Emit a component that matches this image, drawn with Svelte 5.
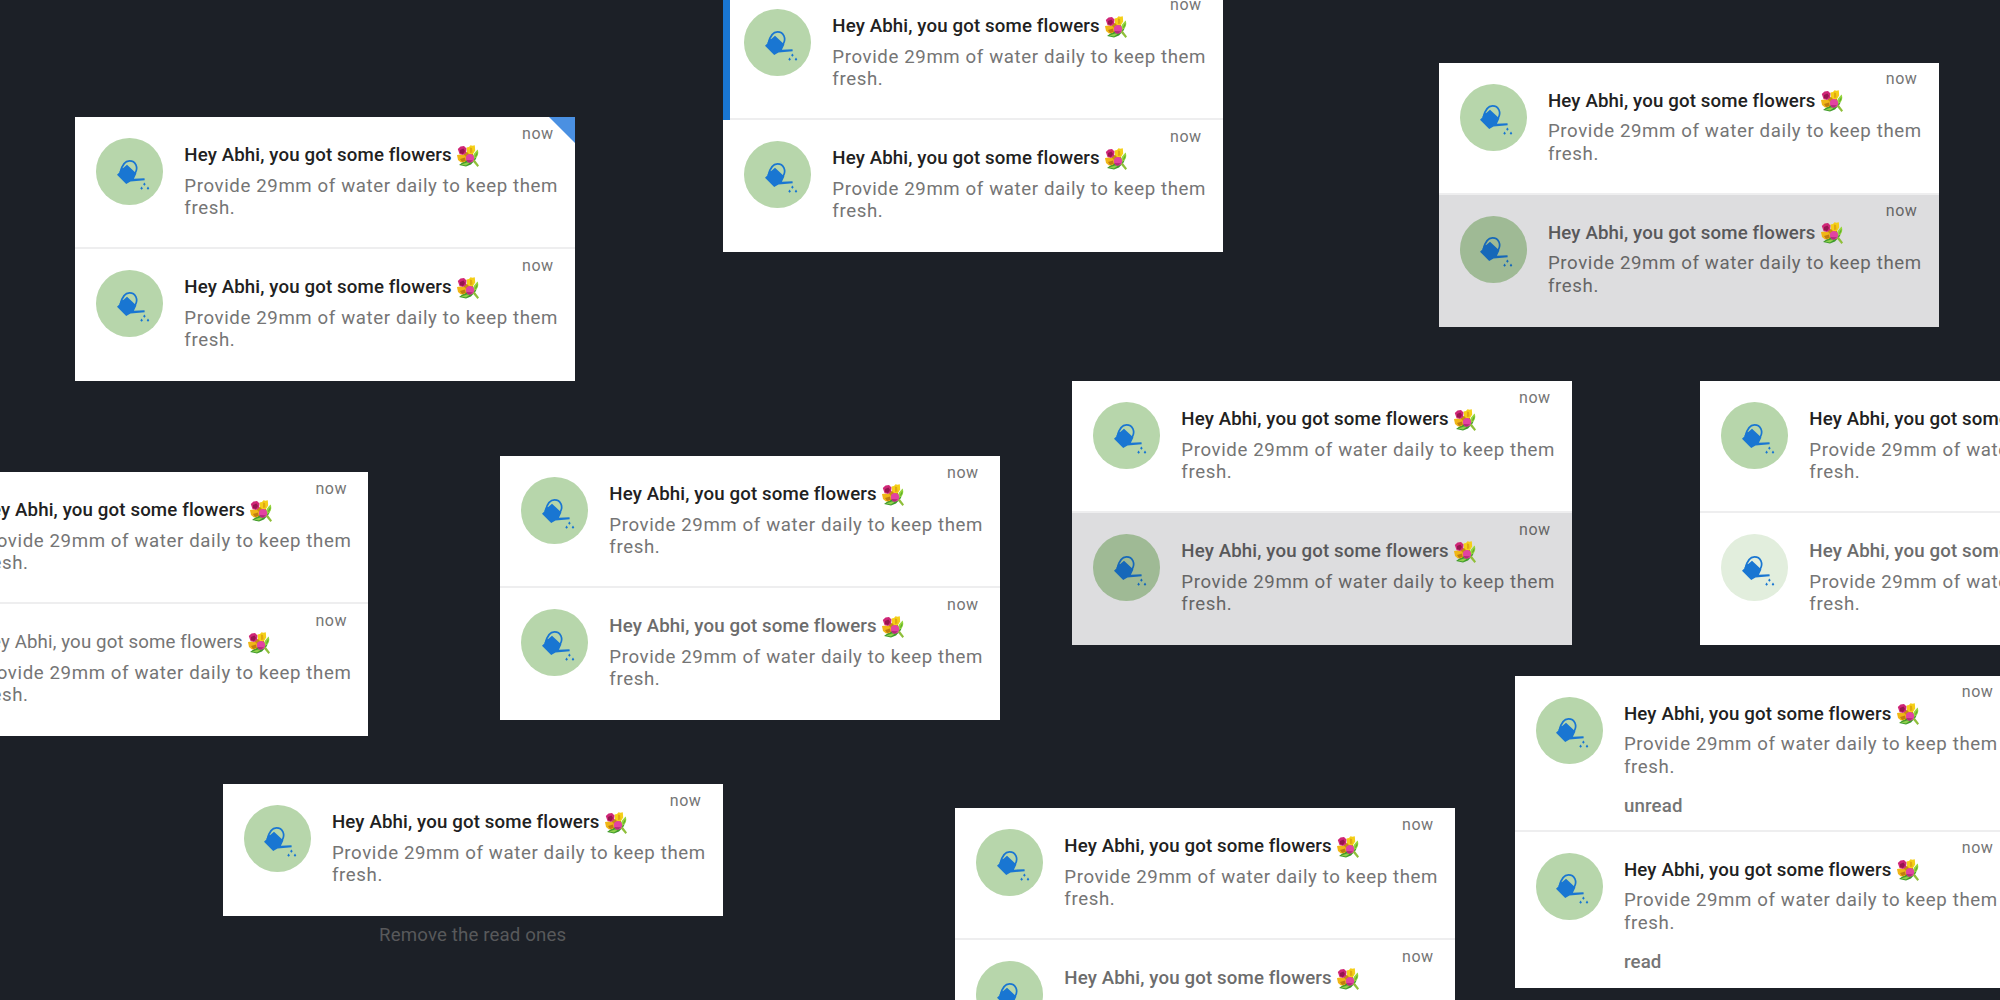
<script>
  const plain = { kind: 'plain' };
  const boards = [
    { x: 75, y: 117, rows: [{ kind: 'corner' }, plain] },
    { x: 723, y: -12, rows: [{ kind: 'bar' }, plain] },
    { x: 1438.7, y: 62.6, rows: [plain, { kind: 'muted shaded' }] },
    { x: -131.7, y: 472, rows: [plain, { kind: 'muted light' }] },
    { x: 500, y: 456, rows: [plain, { kind: 'muted' }] },
    { x: 1072, y: 381, rows: [plain, { kind: 'muted shaded' }] },
    { x: 1700, y: 381, rows: [plain, { kind: 'muted faded' }] },
    { x: 222.7, y: 784, rows: [plain], caption: 'Remove the read ones' },
    { x: 955, y: 808, rows: [plain, { kind: 'muted' }] },
    { x: 1514.7, y: 675.7, rows: [{ kind: 'labelled', label: 'unread' }, { kind: 'labelled', label: 'read' }] },
  ];
</script>

{#snippet flowers()}
  <svg class="flowers" viewBox="0 0 22 22" aria-hidden="true">
    <path d="M6 10 12 5 16 8 16 14 8 17z" fill="#c98a12" />
    <path d="M2 20 8 15.500 14 16 20 9 19 14 14 19.500 9 21.500z" fill="#3f9a2c" />
    <path d="M4 19.500 10 17.500 14 17 9 20.500z" fill="#8fd04a" />
    <path d="M15 15.500 17.500 14.500 22 20.500 20.500 22z" fill="#8fbf3a" />
    <path d="M15.500 14.500C15 10 18.500 6.500 20.700 4.500 22.300 9.500 20.500 13.500 15.500 14.500z" fill="#96d63c" />
    <path d="M18 12C18.500 9.500 19.500 8 20.500 7 20.500 10 19.500 11.500 18 12z" fill="#5cae2c" />
    <path d="M9.500 2.500 12 2 13.500 .300 15.500 .800 17.800 .300 18.200 5.500 16 9 12.500 9.500 10 7z" fill="#f5cf17" />
    <path d="M13 2.500 15 3 15.500 7.500 13 8z" fill="#e0a810" />
    <path d="M0 10 3.500 9.500 8 10.500 9.500 13 8 17 4 17.500 1 15z" fill="#f0b616" />
    <path d="M3 14 8 12.500 8.500 16 5 17z" fill="#c07c10" />
    <path d="M.800 4 3.500 1.500 7 1 9.500 3.500 9 8 6 10 2.500 9z" fill="#cf2677" />
    <path d="M3 5 6.500 3.500 8 6 6 9 3 8z" fill="#96164f" />
    <circle cx="13" cy="13.200" r="4.200" fill="#e243a2" />
    <path d="M9.500 15 16 15.200 13 17.800 10.500 17.300z" fill="#b42a7e" />
  </svg>
{/snippet}

{#snippet wateringCan()}
  <svg class="can" viewBox="0 0 34 34" aria-hidden="true">
    <path d="M4.200 14.500C5.500 9 8.200 2.900 13.500 2.900 19.500 2.900 22.800 9.200 19 15.500" fill="none" stroke="#1976d2" stroke-width="1.700" />
    <path d="M1 16.700 3.300 14.500 5 10.500 7.500 9.700 11 6.800 20.400 15.400 17.900 20.700 28.500 20.200 28.700 22.300 14.500 23.400 10.200 26z" fill="#1976d2" />
    <path d="M28.400 24.400l1.300 1.900-1.300 1.400-1.300-1.400zM25.600 28.500l1.300 1.900-1.300 1.400-1.300-1.400zM32 28.500l1.300 1.900-1.300 1.400-1.300-1.400z" fill="#1976d2" />
  </svg>
{/snippet}

<main class="canvas">
  {#each boards as board}
    <section class="board" style="left: {board.x}px; top: {board.y}px">
      <div class="list">
        {#each board.rows as row}
          <article class="row {row.kind}">
            <div class="avatar">{@render wateringCan()}</div>
            <div class="text">
              <h2>Hey Abhi, you got some flowers {@render flowers()}</h2>
              <p>Provide 29mm of water daily to keep them fresh.</p>
              {#if row.label}<strong>{row.label}</strong>{/if}
            </div>
            <time>now</time>
          </article>
        {/each}
      </div>
      {#if board.caption}<div class="caption">{board.caption}</div>{/if}
    </section>
  {/each}
</main>

<style>
  :global(body) { background: #1c2027; }
  .canvas {
    position: relative;
    width: 2000px;
    height: 1000px;
    overflow: hidden;
    background: #1c2027;
    font-family: Roboto, "Liberation Sans", sans-serif;
    color: #757575;
  }
  .board { position: absolute; width: 500px; }
  .list { background: #fff; }
  .row {
    position: relative;
    box-sizing: border-box;
    display: flex;
    gap: 21.300px;
    height: 132px;
    padding: 21.300px 0 0 21.300px;
  }
  .row:not(:last-child) { border-bottom: 2px solid #eeeeef; }
  .labelled { height: 156px; }
  .avatar {
    box-sizing: border-box;
    flex: none;
    width: 66.700px;
    height: 66.700px;
    padding: 19.300px 0 0 19.300px;
    border-radius: 50%;
    background: #b7d6ab;
  }
  .can { display: block; width: 34px; height: 34px; }
  .text { flex: none; width: 384px; padding-top: 6px; }
  h2 {
    margin: 0;
    font-size: 18.670px;
    font-weight: 500;
    line-height: 22px;
    letter-spacing: .140px;
    color: #212121;
    white-space: nowrap;
  }
  .flowers { width: 22px; height: 22px; margin: -4px 0 -3px .500px; vertical-align: -2.500px; }
  p {
    margin: 8.300px 0 0;
    font-size: 18.670px;
    line-height: 22.670px;
    letter-spacing: .610px;
  }
  strong { display: block; margin-top: 16px; font-size: 18.670px; line-height: 22px; font-weight: 500; letter-spacing: .140px; }
  time {
    position: absolute;
    top: 6.600px;
    right: 21.300px;
    font-size: 16px;
    line-height: 20px;
    letter-spacing: .550px;
  }
  .muted h2 { color: #6c6c6c; }
  .light h2 { font-weight: 400; color: #757575; letter-spacing: .140px; }
  .shaded { background: #dddddf; color: #666; }
  .shaded h2 { color: #58585a; }
  .shaded .avatar { background: #9fba95; }
  .shaded .can { filter: brightness(.88); }
  .faded .avatar { background: #e2eedd; }
  .bar::before {
    content: "";
    position: absolute;
    left: 0;
    top: 0;
    bottom: -2px;
    width: 6.700px;
    background: #1976d2;
  }
  .corner::after {
    content: "";
    position: absolute;
    top: 0;
    right: 0;
    border-top: 26.500px solid #4a90e2;
    border-left: 26.500px solid transparent;
  }
  .caption { margin-top: 6.700px; text-align: center; font-size: 18.670px; line-height: 24px; letter-spacing: .140px; color: #58595b; }
</style>
